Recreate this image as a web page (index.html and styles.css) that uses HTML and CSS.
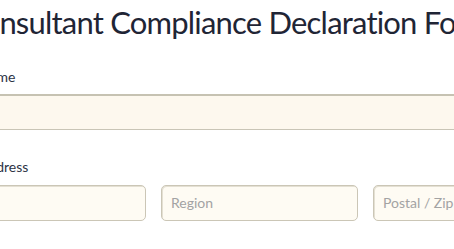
FILE: index.html
```html
<!DOCTYPE html>
<html>
<head>
    <meta charset="utf-8">
    <title>Consultant Compliance Declaration Form</title>

    <link rel="stylesheet" href="styles.css">
</head>
<body>

<div class="form-page">

    <h1 class="form-title">Consultant Compliance Declaration Form</h1>

    <div class="form-line">
        <label class="form-label" for="name">Name</label>
        <input type="text" class="form-input form-input-full" id="name">
    </div>

    <div class="form-line">
        <label class="form-label" for="city">Address</label>
        <div class="address-row">
            <input type="text" class="form-input form-input-box" id="city" placeholder="City">
            <input type="text" class="form-input form-input-box" placeholder="Region">
            <input type="text" class="form-input form-input-box" placeholder="Postal / Zip">
        </div>
    </div>

</div>

</body>
</html>
```

FILE: styles.css
```css
/* Page */

body {
    margin: 0;
    overflow: hidden;
    background: #fff;
    font-family: Lato, "Open Sans", sans-serif;
    color: #2c3345;
}

.form-page {
    width: 660px;
    margin-left: -51px;
    padding-top: 4px;
}

/* Title */

.form-title {
    margin: 0 0 28px 14px;
    font-size: 31px;
    font-weight: 400;
    line-height: 1.2;
    letter-spacing: -0.8px;
    white-space: nowrap;
    color: #1f2535;
}

/* Lines */

.form-line {
    display: flex;
    flex-direction: column;
    gap: 8px;
    margin-bottom: 29px;
}

.form-label {
    padding-left: 30px;
    font-size: 14px;
    line-height: 1.2;
    color: #2c3345;
}

.form-input {
    box-sizing: border-box;
    height: 36px;
    font-family: inherit;
    font-size: 14px;
    color: #2c3345;
    background: #fdf8ee;
    outline: none;
}

.form-input::placeholder {
    color: #a3a3a3;
}

.form-input-full {
    width: 100%;
    border: 1px solid #c9c5b6;
    border-top: 2px solid #c6c2b2;
    border-left: 0;
    border-right: 0;
}

/* Address */

.address-row {
    display: flex;
    gap: 15px;
    margin-top: 1px;
}

.form-input-box {
    width: 197px;
    padding: 0 9px;
    border: 1px solid #cbc6b6;
    border-radius: 5px;
    background: #fefbf3;
    box-shadow: inset 1px 1px 0 #e4e0d3;
}
```
